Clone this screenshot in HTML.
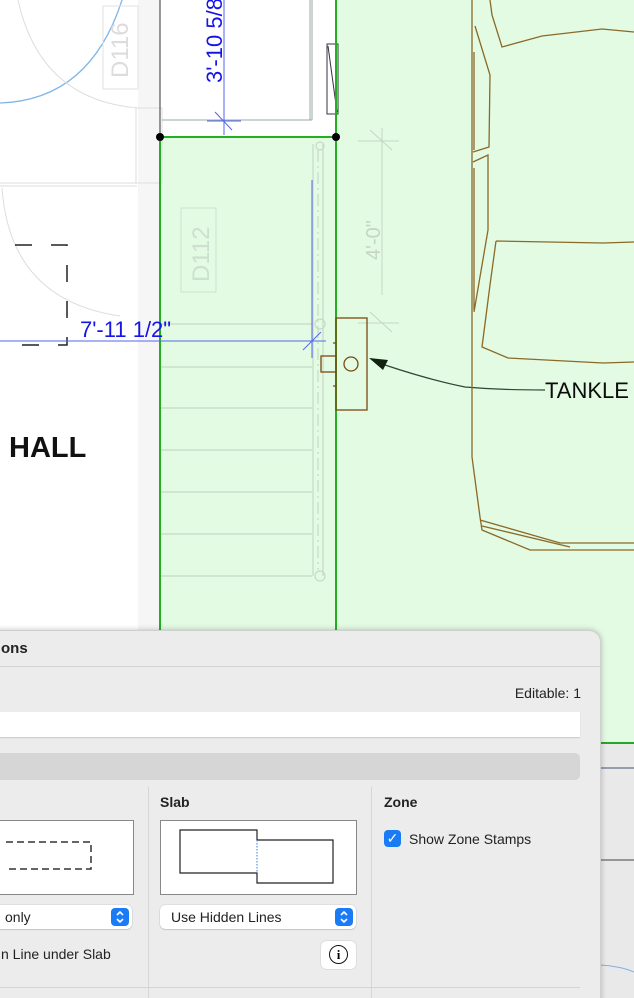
<!DOCTYPE html>
<html><head><meta charset="utf-8"><style>
html,body{margin:0;padding:0;width:634px;height:998px;overflow:hidden;background:#fff;font-family:"Liberation Sans",sans-serif;position:relative}
svg{position:absolute;left:0;top:0}
.dlg{position:absolute;left:-20px;top:630px;width:619px;height:380px;background:#ececec;border-radius:0 12px 0 0;box-shadow:0 0 6px rgba(0,0,0,.25);border:1px solid #cfcfcf;overflow:hidden}
.t{position:absolute;font-size:14px;color:#222;white-space:nowrap}
.b{font-weight:bold}
.sel{position:absolute;height:24px;background:#fff;border-radius:5px;box-shadow:0 0 1px rgba(0,0,0,.35),0 1px 1px rgba(0,0,0,.12)}
.arr{position:absolute;right:3px;top:3px;width:18px;height:18px;background:#1a7cf5;border-radius:4px}
.arr svg{position:absolute;left:0;top:0}
</style></head><body>
<svg width="634" height="998" viewBox="0 0 634 998">
<rect x="138" y="0" width="22" height="630" fill="#f6f6f6"/>
<rect x="160" y="137" width="176" height="493" fill="#e3fae3"/>
<rect x="336" y="0" width="298" height="743" fill="#e3fae3"/>
<rect x="599" y="743" width="35" height="255" fill="#e9e9e9"/>
<line x1="599" y1="743" x2="634" y2="743" stroke="#2aa52a" stroke-width="2"/>
<line x1="599" y1="768" x2="634" y2="768" stroke="#7a8799" stroke-width="1.5"/>
<line x1="599" y1="860" x2="634" y2="860" stroke="#444" stroke-width="1"/>
<path d="M599 965 Q620 966 634 972" stroke="#7fb0e6" fill="none"/>
<path d="M0 103 Q90 100 122 0" stroke="#7fb5ea" stroke-width="1.3" fill="none"/>
<path d="M18 0 Q40 100 138 108" stroke="#ddd" fill="none"/>
<path d="M2 188 Q10 300 120 316" stroke="#ddd" fill="none"/>
<rect x="103" y="6" width="35" height="83" fill="none" stroke="#e2e2e2"/>
<text transform="translate(128 78) rotate(-90)" font-size="24" fill="#dcdcdc">D116</text>
<path d="M0 183 H137 M0 186 H137" stroke="#ddd"/>
<rect x="136" y="108" width="26" height="75" fill="none" stroke="#ddd"/>
<path d="M160 0 V137 M336 0 V137" stroke="#555" stroke-width="1.2"/>
<path d="M310 0 V120 M312 0 V120 M162 120 H312" stroke="#9aa" stroke-width="1"/>
<rect x="327" y="44" width="11" height="70" fill="#fff" stroke="#334" stroke-width="1"/>
<line x1="328" y1="46" x2="337" y2="112" stroke="#334"/>
<line x1="224" y1="0" x2="224" y2="135" stroke="#5566ee"/>
<line x1="207" y1="121" x2="241" y2="121" stroke="#5566ee"/>
<line x1="215" y1="112" x2="232" y2="130" stroke="#5566ee"/>
<text transform="translate(222 83) rotate(-90)" font-size="22" fill="#1515e8">3'-10 5/8</text>
<g stroke="#c8d8c8" stroke-width="1.2">
<path d="M160 324 H312 M160 367 H312 M160 408 H312 M160 450 H312 M160 492 H312 M160 534 H312 M160 576 H312"/>
<path d="M313 144 V576 M323 144 V576"/>
<path d="M318 150 V570" stroke-dasharray="12 4 2 4"/>
<circle cx="320" cy="146" r="4" fill="none"/><circle cx="320" cy="324" r="5" fill="none"/><circle cx="320" cy="576" r="5" fill="none"/>
</g>
<rect x="181" y="208" width="35" height="84" fill="none" stroke="#cfe0cf"/>
<text transform="translate(209 282) rotate(-90)" font-size="24" fill="#cfdfcf">D112</text>
<g stroke="#c5d5c5"><line x1="382" y1="128" x2="382" y2="295"/><line x1="358" y1="141" x2="399" y2="141"/><line x1="370" y1="130" x2="392" y2="150"/><line x1="358" y1="323" x2="399" y2="323"/><line x1="370" y1="312" x2="392" y2="332"/></g>
<text transform="translate(380 260) rotate(-90)" font-size="20" fill="#c5d5c5">4'-0"</text>
<path d="M160 137 V630 M336 0 V630 M160 137 H336" stroke="#22b022" stroke-width="2" fill="none"/>
<circle cx="160" cy="137" r="4"/><circle cx="336" cy="137" r="4"/>
<path d="M15 245 H67 V345 H15" stroke="#222" stroke-width="1.5" fill="none" stroke-dasharray="17 19"/>
<line x1="0" y1="341" x2="326" y2="341" stroke="#5566ee"/>
<line x1="312" y1="180" x2="312" y2="358" stroke="#5566ee"/>
<line x1="303" y1="350" x2="321" y2="332" stroke="#5566ee"/>
<text x="80" y="337" font-size="22" fill="#1515e8">7'-11 1/2"</text>
<text x="9" y="457" font-size="29" font-weight="bold" fill="#111">HALL</text>
<g stroke="#7a4a10" stroke-width="1.3" fill="none">
<rect x="336" y="318" width="31" height="92"/>
<rect x="321" y="356" width="15" height="16"/>
<circle cx="351" cy="364" r="7"/>
<path d="M333 343 h3 M333 386 h3"/>
</g>
<path d="M385 365 Q430 380 465 387 Q500 390 545 390" stroke="#334433" stroke-width="1.2" fill="none"/>
<polygon points="369,358 388,360 383,370" fill="#112211"/>
<text x="545" y="398" font-size="22" fill="#0c0c0c">TANKLE</text>
<g stroke="#8a6a28" stroke-width="1.3" fill="none">
<path d="M472 0 V457 L480 517 L482 530 L530 550 H634"/>
<path d="M480 520 L560 543 H634 M482 526 L570 547"/>
<path d="M490 0 L492 15 L502 47 L542 36 L602 29 L634 32"/>
<path d="M475 26 L490 75 L489 147 L473 152 M474 52 V150"/>
<path d="M473 162 L488 155 L488 230 L474 312 M474 168 V310"/>
<path d="M496 241 L603 243 L634 242 M496 241 L490 285 L482 347 L508 358 L603 363 L634 362"/>
</g>
</svg>
<div class="dlg">
<div class="t b" style="left:20px;top:9px;font-size:15px">ons</div>
<div style="position:absolute;left:0;right:0;top:35px;border-top:1px solid #d4d4d4"></div>
<div class="t" style="right:19px;top:54px">Editable: 1</div>
<div style="position:absolute;left:0;top:81px;width:599px;height:25px;background:#fff;box-shadow:0 1px 1px rgba(0,0,0,.15)"></div>
<div style="position:absolute;left:0;top:122px;width:599px;height:27px;background:#d6d6d6;border-radius:5px"></div>
<div style="position:absolute;left:167px;top:156px;height:260px;border-left:1px solid #d6d6d6"></div>
<div style="position:absolute;left:390px;top:156px;height:260px;border-left:1px solid #d6d6d6"></div>
<div style="position:absolute;left:0;top:356px;width:599px;border-top:1px solid #d4d4d4"></div>
<div class="t b" style="left:179px;top:163px">Slab</div>
<div class="t b" style="left:403px;top:163px">Zone</div>
<div style="position:absolute;left:0;top:189px;width:151px;height:73px;background:#fff;border:1px solid #888"></div>
<svg style="left:0;top:189px" width="153" height="75"><path d="M25 22 H110 V49 H25" fill="none" stroke="#333" stroke-width="1.5" stroke-dasharray="7 4"/></svg>
<div style="position:absolute;left:179px;top:189px;width:195px;height:73px;background:#fff;border:1px solid #888"></div>
<svg style="left:179px;top:189px" width="197" height="75"><path d="M20 10 H97 V20 H173 V63 H97 V53 H20 Z" fill="none" stroke="#222" stroke-width="1.2"/><line x1="97" y1="20" x2="97" y2="53" stroke="#3a7bea" stroke-dasharray="1.5 1.5"/></svg>
<div class="sel" style="left:0;top:274px;width:151px"><span class="t" style="left:24px;top:4px">only</span><div class="arr"><svg width="18" height="18"><path d="M6 7 L9 4 L12 7 M6 11 L9 14 L12 11" stroke="#fff" stroke-width="1.6" fill="none"/></svg></div></div>
<div class="sel" style="left:179px;top:274px;width:196px"><span class="t" style="left:11px;top:4px">Use Hidden Lines</span><div class="arr"><svg width="18" height="18"><path d="M6 7 L9 4 L12 7 M6 11 L9 14 L12 11" stroke="#fff" stroke-width="1.6" fill="none"/></svg></div></div>
<div class="t" style="left:20px;top:315px">n Line under Slab</div>
<div style="position:absolute;left:340px;top:310px;width:35px;height:28px;background:#fff;border-radius:5px;box-shadow:0 0 1px rgba(0,0,0,.4)"><div style="position:absolute;left:8px;top:4px;width:17px;height:17px;border:1.5px solid #111;border-radius:50%;font:bold 13px 'Liberation Serif',serif;text-align:center;line-height:17px">i</div></div>
<div style="position:absolute;left:403px;top:199px;width:17px;height:17px;background:#1a7cf5;border-radius:4px;color:#fff;font-size:14px;text-align:center;line-height:17px">✓</div>
<div class="t" style="left:428px;top:200px">Show Zone Stamps</div>
</div>
</body></html>
